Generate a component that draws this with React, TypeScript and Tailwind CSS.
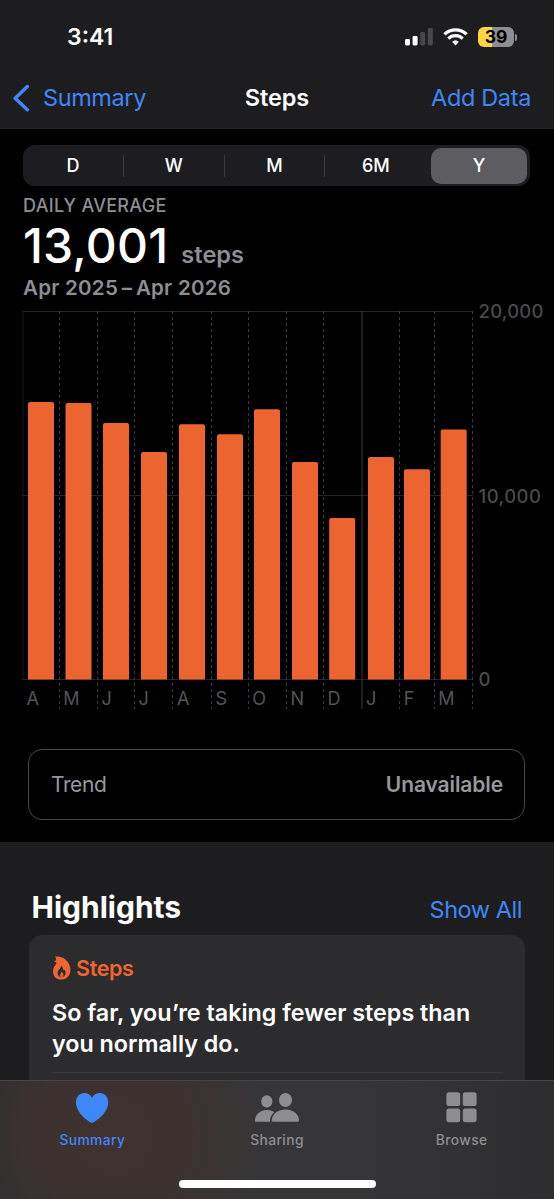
import { ReactNode } from "react";

const ranges = ["D", "W", "M", "6M", "Y"];

const CHART_TOP = 300;
const BASELINE = 679.5;

const months = [
  { label: "A", line: 23, bar: 28, top: 402, text: 26.6 },
  { label: "M", line: 59.5, bar: 65.5, top: 403, text: 63.2 },
  { label: "J", line: 97.5, bar: 103, top: 423, text: 101.6 },
  { label: "J", line: 134.5, bar: 141, top: 452, text: 138.6 },
  { label: "A", line: 172.5, bar: 179, top: 424.2, text: 177.1 },
  { label: "S", line: 211.5, bar: 217, top: 434.2, text: 215.4 },
  { label: "O", line: 248.5, bar: 254, top: 409.2, text: 252.2 },
  { label: "N", line: 286.5, bar: 292, top: 462, text: 290.4 },
  { label: "D", line: 323.5, bar: 329.2, top: 518, text: 327.4 },
  { label: "J", line: 362, bar: 368, top: 457, text: 366 },
  { label: "F", line: 399.5, bar: 404, top: 469.2, text: 403.8 },
  { label: "M", line: 434.5, bar: 440.7, top: 429.5, text: 438.2 },
];

const StatusBar = () => (
  <div className="flex h-[74px] items-center justify-between pl-[67px] pr-[37px]">
    <span className="text-[23px] leading-[30px] font-semibold">3:41</span>
    <div className="flex items-center">
      <svg width="28" height="18" viewBox="0 0 28 18">
        <rect x="0" y="11" width="5" height="6.5" rx="1.4" fill="#fff" />
        <rect x="7.6" y="8" width="5" height="9.5" rx="1.4" fill="#fff" />
        <rect x="15.2" y="4" width="5" height="13.5" rx="1.4" fill="#48484a" />
        <rect x="22.8" y="0" width="5" height="17.5" rx="1.4" fill="#48484a" />
      </svg>
      <svg
        className="ml-[10px]"
        width="25"
        height="18"
        viewBox="0 0 25 18"
        fill="none"
        stroke="#fff"
        strokeWidth="3.3"
      >
        <path d="M1.4 6.4a15.8 15.8 0 0 1 22.2 0" />
        <path d="M5.3 10.6a10.3 10.3 0 0 1 14.4 0" />
        <path
          d="M12.5 17.4l-3.4-3.6a5.1 5.1 0 0 1 6.8 0z"
          fill="#fff"
          stroke="none"
        />
      </svg>
      <div className="ml-[10px] flex h-5 w-9 items-center justify-center rounded-[6px] bg-[linear-gradient(90deg,#fcd444_0_14px,#8e8e92_14px)] text-[17.5px] leading-5 font-bold text-black">
        39
      </div>
      <div className="ml-px h-[7px] w-[2px] rounded-r-full bg-[#8e8e92]" />
    </div>
  </div>
);

const NavBar = () => (
  <nav className="flex h-[54px] items-start text-[23.5px] leading-[48px] text-[#3f87f8]">
    <div className="flex w-[185px] items-center pl-[13px]">
      <svg width="17" height="28" viewBox="0 0 17 28" fill="none">
        <path
          d="M14.3 2.5L2.2 14.2L14.3 25.7"
          stroke="#3f87f8"
          strokeWidth="3.5"
          strokeLinecap="round"
          strokeLinejoin="round"
        />
      </svg>
      <span className="ml-[13px] tracking-[-0.4px]">Summary</span>
    </div>
    <h1 className="flex-1 text-center font-semibold tracking-[-0.1px] text-white">
      Steps
    </h1>
    <span className="w-[185px] pr-[23px] text-right tracking-[-0.35px]">
      Add Data
    </span>
  </nav>
);

const RangePicker = () => (
  <div className="mr-[24px] ml-[23px] mt-4 flex h-[41px] rounded-xl bg-[#1d1c20] py-[2px] pr-[3px] text-lg leading-[37px] font-medium">
    {ranges.map((range, i) => (
      <div key={range} className="flex flex-1 items-center">
        <div
          className={
            range === "Y"
              ? "ml-[5px] h-[36px] flex-1 rounded-[10px] bg-[#5d5c61] text-center leading-[35px]"
              : "flex-1 text-center"
          }
        >
          {range}
        </div>
        {i < 3 ? <div className="h-[22px] w-px bg-[#3b3b3e]" /> : null}
      </div>
    ))}
  </div>
);

const Chart = () => (
  <svg
    className="block font-medium"
    width="554"
    height="415"
    viewBox={`0 ${CHART_TOP} 554 415`}
    fontSize="18"
  >
    <g stroke="#232325">
      <path d="M22 311.5H473M22 495.5H473M22 679.5H473" />
    </g>
    {months.map((m, i) => (
      <g key={m.line}>
        <path
          d={`M${m.line} 311V${i === 0 ? 680 : 709}`}
          stroke={i === 0 ? "#1a1a1c" : "#3a3a3c"}
          strokeDasharray={i === 0 || i === 9 ? undefined : "3 3"}
        />
        <path
          d={`M${m.bar} ${BASELINE}V${m.top + 2}q0 -2 2 -2h22q2 0 2 2V${BASELINE}z`}
          fill="#ec6430"
        />
        <text x={m.text} y="704.5" fill="#545457" fontWeight="400">
          {m.label}
        </text>
      </g>
    ))}
    <path d="M472.5 311V709" stroke="#3a3a3c" strokeDasharray="3 3" />
    <g fill="#4a4a4c" fontSize="18.5">
      <text x="478.5" y="318" textLength="65">
        20,000
      </text>
      <text x="478.5" y="502.5" textLength="62.5">
        10,000
      </text>
      <text x="478.5" y="686">0</text>
    </g>
  </svg>
);

const Tab = (props: { label: string; active?: boolean; children: ReactNode }) => (
  <div
    className={
      props.active
        ? "flex flex-1 flex-col items-center text-[#3f87f8]"
        : "flex flex-1 flex-col items-center text-[#8e8e90]"
    }
  >
    <svg width="46" height="34" viewBox="0 0 46 34" fill="currentColor">
      {props.children}
    </svg>
    <span className="mt-[6px] text-[13.8px] leading-[18px] font-medium tracking-[0.4px]">
      {props.label}
    </span>
  </div>
);

export default function App() {
  return (
    <div className="flex h-[1199px] w-[554px] flex-col overflow-hidden bg-black font-['Inter',sans-serif] text-white">
      <header className="h-[129px] shrink-0 border-b border-[#242426] bg-[#1d1d1f]">
        <StatusBar />
        <NavBar />
      </header>

      <main className="h-[713px] shrink-0">
        <RangePicker />
        <section className="h-[114px] pl-[23px] font-medium text-[#8e8e92]">
          <p className="pt-2 text-[18px] leading-6 tracking-[0.3px]">
            DAILY AVERAGE
          </p>
          <p className="flex h-[55px] items-baseline text-[23.6px] leading-[55px]">
            <span className="mr-[13px] text-[48px] tracking-[0.2px] text-white">
              13,001
            </span>
            <span className="font-semibold">steps</span>
          </p>
          <p className="text-[20.5px] leading-[30px] font-semibold tracking-[0.26px]">
            Apr 2025{"\u2009"}–{"\u2009"}Apr 2026
          </p>
        </section>
        <Chart />
        <div className="mr-[29px] ml-[28px] mt-[34px] flex h-[71px] items-center justify-between rounded-[14px] border border-[#48484a] pr-[21px] pl-[22px] text-[21px] text-[#98989c]">
          <span className="tracking-[-0.4px]">Trend</span>
          <span className="font-semibold tracking-[-0.1px]">Unavailable</span>
        </div>
      </main>

      <section className="h-[238px] shrink-0 bg-[#1d1d1f] px-[29px]">
        <div className="flex h-[93px] items-end justify-between pr-[3px] pb-[8px] pl-[2.5px]">
          <h2 className="text-[30px] leading-10 font-bold">Highlights</h2>
          <span className="text-[23.5px] leading-[34px] tracking-[-0.45px] text-[#3f87f8]">
            Show All
          </span>
        </div>
        <div className="h-[145px] rounded-t-[14px] bg-[#2c2c2e] px-[23px] pt-[18px]">
          <div className="flex h-[30px] items-center text-[21.5px] font-semibold tracking-[-0.35px] text-[#f0652f]">
            <svg
              className="-mt-px mr-[5px]"
              width="19"
              height="24"
              viewBox="0 0 19 24"
              fill="currentColor"
            >
              <path
                fillRule="evenodd"
                d="M3 .6C8.5-.3 13.2 2.2 15.9 6.2C18.6 10.2 19.3 15.2 17.2 19C15.6 22 12.8 23.6 9.4 23.6C4.6 23.6 1 20.3 1 15.4C1 12.8 1.8 11 3.2 9.2C4.2 8 4.6 7.3 4.4 6.2L2 5.4C3.3 5 4.1 4.4 4.1 3.2C4.1 2.2 3.7 1.3 3 .6ZM9 9.6C9.4 12.4 5.6 13.6 5.6 17.1C5.6 19.6 7.2 21.1 9.6 21.1C12 21.1 13.6 19.4 13.6 17.1C13.6 15.6 13.1 14.5 12.2 13.5L11.6 14.8C11.3 12.6 10.6 10.9 9 9.6Z"
              />
              <path d="M9.7 15.6C9.6 17.2 8.1 17.6 8.1 19.1C8.1 20.1 8.7 21 9.7 21C10.8 21 11.4 20.1 11.4 19.1C11.4 17.6 10.5 16.6 9.7 15.6Z" />
            </svg>
            Steps
          </div>
          <p className="mt-[14px] border-b border-[#39393b] pb-[13px] text-[23.3px] leading-[31px] font-semibold whitespace-nowrap">
            So far, you’re taking fewer steps than
            <br />
            you normally do.
          </p>
        </div>
      </section>

      <footer className="flex h-[119px] shrink-0 flex-col items-center border-t border-[#454547] bg-[radial-gradient(ellipse_150px_150px_at_115px_55px,#40322f_0%,#3d3230_45%,transparent_100%),linear-gradient(90deg,#2e2e30_0%,#363638_25%,#363638_65%,#2d2d2f_100%)]">
        <div className="flex w-full pt-[10px]">
          <Tab label="Summary" active>
            <path d="M23 31.8C20.8 31.8 7 22.5 7 11.5C7 5.8 10.7 2 15.2 2C18.8 2 21.5 4 23 6.8C24.5 4 27.2 2 30.8 2C35.5 2 39.2 5.8 39.2 11.5C39.2 22.5 25.2 31.8 23 31.8Z" />
          </Tab>
          <Tab label="Sharing">
            <ellipse cx="12.8" cy="10.4" rx="5.6" ry="6.2" />
            <path d="M1.4 30.8Q1 30.8 1 29.5C1 24 5.8 18.9 12.8 18.9C15.7 18.9 18.3 19.7 20.3 21.1C17.5 23.5 16 26.5 16 29.5Q16 30.3 16.3 30.8Z" />
            <ellipse cx="31.5" cy="9" rx="6.5" ry="7" />
            <path d="M19.3 30.8Q17.8 30.8 17.8 29.2C17.8 24 23.2 18.6 31.5 18.6C39.8 18.6 45 24 45 29.2Q45 30.8 43.5 30.8Z" />
          </Tab>
          <Tab label="Browse">
            <rect x="7.4" y="1.2" width="13.8" height="13.8" rx="2.6" />
            <rect x="23.8" y="1.2" width="13.8" height="13.8" rx="2.6" />
            <rect x="7.4" y="17.4" width="13.8" height="13.8" rx="2.6" />
            <rect x="23.8" y="17.4" width="13.8" height="13.8" rx="2.6" />
          </Tab>
        </div>
        <div className="mt-[31px] h-2 w-[197px] rounded-full bg-white" />
      </footer>
    </div>
  );
}
